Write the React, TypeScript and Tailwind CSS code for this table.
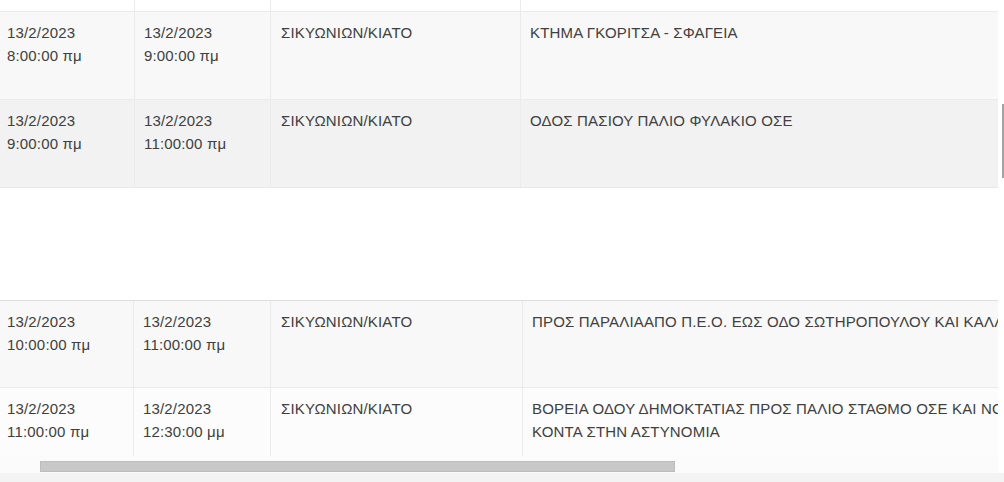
type Row = {
  from: [string, string];
  to: [string, string];
  area: string;
  place: string[];
  bg: string;
  h: string;
};

const top: Row[] = [
  {
    from: ["13/2/2023", "8:00:00 πμ"],
    to: ["13/2/2023", "9:00:00 πμ"],
    area: "ΣΙΚΥΩΝΙΩΝ/ΚΙΑΤΟ",
    place: ["ΚΤΗΜΑ ΓΚΟΡΙΤΣΑ - ΣΦΑΓΕΙΑ"],
    bg: "bg-[#f8f8f8]",
    h: "h-[88px]",
  },
  {
    from: ["13/2/2023", "9:00:00 πμ"],
    to: ["13/2/2023", "11:00:00 πμ"],
    area: "ΣΙΚΥΩΝΙΩΝ/ΚΙΑΤΟ",
    place: ["ΟΔΟΣ ΠΑΣΙΟΥ ΠΑΛΙΟ ΦΥΛΑΚΙΟ ΟΣΕ"],
    bg: "bg-[#f2f2f2]",
    h: "h-[88px]",
  },
];

const bottom: Row[] = [
  {
    from: ["13/2/2023", "10:00:00 πμ"],
    to: ["13/2/2023", "11:00:00 πμ"],
    area: "ΣΙΚΥΩΝΙΩΝ/ΚΙΑΤΟ",
    place: ["ΠΡΟΣ ΠΑΡΑΛΙΑΑΠΟ Π.Ε.Ο. ΕΩΣ ΟΔΟ ΣΩΤΗΡΟΠΟΥΛΟΥ ΚΑΙ ΚΑΛΛΙΟΠΗΣ"],
    bg: "bg-[#f8f8f8]",
    h: "h-[87px]",
  },
  {
    from: ["13/2/2023", "11:00:00 πμ"],
    to: ["13/2/2023", "12:30:00 μμ"],
    area: "ΣΙΚΥΩΝΙΩΝ/ΚΙΑΤΟ",
    place: ["ΒΟΡΕΙΑ ΟΔΟΥ ΔΗΜΟΚΤΑΤΙΑΣ ΠΡΟΣ ΠΑΛΙΟ ΣΤΑΘΜΟ ΟΣΕ ΚΑΙ ΝΟΤΙΑ", "ΚΟΝΤΑ ΣΤΗΝ ΑΣΤΥΝΟΜΙΑ"],
    bg: "bg-[#fcfcfc]",
    h: "h-[69px]",
  },
];

function TableRow({ row, widths, line }: { row: Row; widths: string[]; line: string }) {
  return (
    <div className={`flex shrink-0 overflow-hidden border-t ${line} ${row.bg} ${row.h}`}>
      <div className={`${widths[0]} shrink-0 pl-[7px] pt-[9px]`}>
        <div>{row.from[0]}</div>
        <div>{row.from[1]}</div>
      </div>
      <div className={`${widths[1]} shrink-0 border-l border-[#ebebeb] pl-[9px] pt-[9px]`}>
        <div>{row.to[0]}</div>
        <div>{row.to[1]}</div>
      </div>
      <div className={`${widths[2]} shrink-0 border-l border-[#ebebeb] pl-[10px] pt-[9px]`}>
        {row.area}
      </div>
      <div className={`${widths[3]} shrink-0 border-l border-[#ebebeb] pl-[9px] pt-[9px]`}>
        {row.place.map((p) => (
          <div key={p} className="whitespace-nowrap">
            {p}
          </div>
        ))}
      </div>
    </div>
  );
}

export default function App() {
  const topW = ["w-[134px]", "w-[136px]", "w-[250px]", "w-[700px]"];
  const botW = ["w-[133px]", "w-[137px]", "w-[252px]", "w-[700px]"];

  return (
    <div
      className="w-[1004px] h-[482px] overflow-hidden bg-[#f3f3f3] text-[15px] leading-[23px] tracking-[0.17px] text-[#404040]"
      style={{ fontFamily: '"Liberation Sans", Arial, sans-serif' }}
    >
      <div className="flex h-[473px] rounded-bl-lg bg-white">
        <div className="flex w-[998px] flex-col overflow-hidden">
          {/* tail of the row above */}
          <div className="flex h-[11px] shrink-0">
            <div className="w-[134px] shrink-0" />
            <div className="w-[136px] shrink-0 border-l border-[#ebebeb]" />
            <div className="w-[250px] shrink-0 border-l border-[#ebebeb]" />
            <div className="w-[700px] shrink-0 border-l border-[#ebebeb]" />
          </div>
          {top.map((r, i) => (
            <TableRow key={i} row={r} widths={topW} line="border-[#ebebeb]" />
          ))}
          <div className="h-[113px] shrink-0 border-t border-[#e8e8e8]" />
          {bottom.map((r, i) => (
            <TableRow key={i} row={r} widths={botW} line={i === 0 ? "border-[#dedede]" : "border-[#ebebeb]"} />
          ))}
          <div className="h-[17px] shrink-0 bg-[#fbfbfb] pl-[40px] pt-[5px]">
            <div className="h-[11px] w-[635px] border border-[#bdbdbd] bg-[#c8c8c8]" />
          </div>
        </div>
        <div className="w-[6px] shrink-0 pl-[4px] pt-[104px]">
          <div className="h-[74px] w-[2px] bg-[#a3a3a3]" />
        </div>
      </div>
    </div>
  );
}
